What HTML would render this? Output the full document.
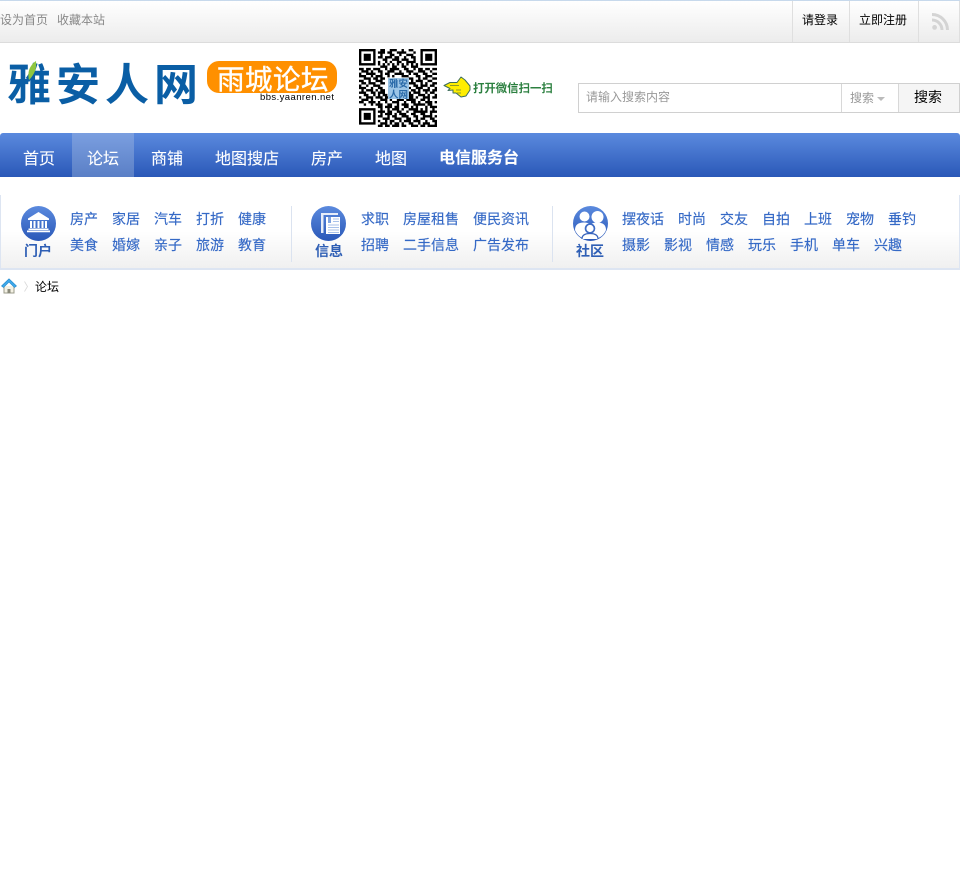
<!DOCTYPE html>
<html lang="zh"><head><meta charset="utf-8"><title>论坛</title>
<style>
html,body{margin:0;padding:0;background:#fff}
#p{position:relative;width:960px;height:873px;overflow:hidden;font-family:"Liberation Sans","WenQuanYi Zen Hei","Noto Sans CJK SC",sans-serif;font-size:12px}
#p div,#p span,#p a,#p svg{position:absolute;display:block}
.t{white-space:nowrap;line-height:20px}
.n{font-size:16px;color:#fff;top:145px;font-family:"Liberation Sans","Noto Sans CJK SC",sans-serif;-webkit-text-stroke:.1px #fff}
.l{font-size:14px;color:#3569c6;font-family:"Liberation Sans","Noto Sans CJK SC",sans-serif;white-space:nowrap;line-height:20px;-webkit-text-stroke:.15px #3569c6}
.r1{top:209px}.r2{top:235px}
.h{font-size:14px;font-weight:700;color:#2f5fb5;top:241px;font-family:"Liberation Sans","Noto Sans CJK SC",sans-serif;line-height:20px;white-space:nowrap}
.v{width:1px;background:#dfdfdf;top:1px;height:41px}
.d{width:1px;background:#dbe3f0;top:206px;height:56px}
</style></head><body><div id="p">
<div style="left:0;top:0;width:960px;height:43px;box-sizing:border-box;border-top:1px solid #c7d9ec;border-bottom:1px solid #dcdcdc;background:linear-gradient(#fff,#ececec)"></div>
<span class="t" style="left:0;top:10px;color:#888">设为首页</span>
<span class="t" style="left:57px;top:10px;color:#888">收藏本站</span>
<div class="v" style="left:792px"></div><div class="v" style="left:849px"></div><div class="v" style="left:918px"></div><div class="v" style="left:959px"></div>
<span class="t" style="left:802px;top:10px;color:#000">请登录</span>
<span class="t" style="left:859px;top:10px;color:#000">立即注册</span>
<svg style="left:932px;top:13px" width="17" height="17" viewBox="0 0 17 17"><circle cx="2.6" cy="14.4" r="2.4" fill="#d4d4d4"/><path d="M0 7a10 10 0 0 1 10 10M0 1.500a15.500 15.500 0 0 1 15.500 15.500" fill="none" stroke="#d4d4d4" stroke-width="3"/></svg>

<span style="left:7px;top:51px;font:700 44px/60px 'Noto Sans CJK SC',sans-serif;color:#0a5ea5;white-space:nowrap;letter-spacing:5px">雅安人网</span>
<svg style="left:27px;top:60px" width="10" height="20" viewBox="0 0 10 20"><path d="M9 1C3 5 0 12 2 20 7 15 10 9 9 1z" fill="#8fc63f"/></svg>
<div style="left:207px;top:61px;width:130px;height:32px;border-radius:12px;background:#ff9000"></div>
<span style="left:217px;top:61px;font:400 27.500px/32px 'Noto Sans CJK SC',sans-serif;color:#fff;white-space:nowrap;letter-spacing:.5px;-webkit-text-stroke:.4px #fff">雨城论坛</span>
<span style="left:260px;top:92px;font:9.500px/12px 'Liberation Sans',sans-serif;color:#000;white-space:nowrap;letter-spacing:.42px">bbs.yaanren.net</span>

<svg style="left:359px;top:49px;filter:blur(.35px)" width="78" height="78" viewBox="0 0 33 33">
<path fill="none" stroke="#000" stroke-width="1" d="M0 .5h7M9 .5h2M13 .5h3M18 .5h1M21 .5h2M26 .5h7
M0 1.500h1M6 1.500h1M8 1.500h3M12 1.500h2M16 1.500h4M23 1.500h1M26 1.500h1M32 1.500h1
M0 2.500h1M2 2.500h3M6 2.500h1M9 2.500h1M13 2.500h2M17 2.500h1M20 2.500h3M26 2.500h1M28 2.500h3M32 2.500h1
M0 3.500h1M2 3.500h3M6 3.500h1M8 3.500h2M11 3.500h3M15 3.500h2M19 3.500h1M22 3.500h2M26 3.500h1M28 3.500h3M32 3.500h1
M0 4.500h1M2 4.500h3M6 4.500h1M10 4.500h2M14 4.500h3M18 4.500h3M23 4.500h1M26 4.500h1M28 4.500h3M32 4.500h1
M0 5.500h1M6 5.500h1M8 5.500h1M11 5.500h1M13 5.500h1M16 5.500h2M20 5.500h4M26 5.500h1M32 5.500h1
M0 6.500h7M8 6.500h1M10 6.500h1M12 6.500h1M14 6.500h1M16 6.500h1M18 6.500h1M20 6.500h1M22 6.500h1M24 6.500h1M26 6.500h7
M9 7.500h3M14 7.500h2M18 7.500h2M22 7.500h3
M0 8.500h2M3 8.500h2M6 8.500h3M11 8.500h1M13 8.500h4M19 8.500h2M23 8.500h1M25 8.500h2M28 8.500h2M31 8.500h2
M1 9.500h3M5 9.500h1M8 9.500h2M12 9.500h3M17 9.500h1M20 9.500h3M25 9.500h3M30 9.500h1
M0 10.500h1M3 10.500h4M9 10.500h1M11 10.500h2M15 10.500h4M21 10.500h1M23 10.500h2M27 10.500h2M31 10.500h2
M0 11.500h3M5 11.500h1M7 11.500h3M12 11.500h1M14 11.500h1M18 11.500h3M24 11.500h2M28 11.500h3
M2 12.500h3M6 12.500h2M9 12.500h2M21 12.500h2M25 12.500h1M27 12.500h2M31 12.500h2
M0 13.500h2M4 13.500h1M7 13.500h3M22 13.500h1M24 13.500h3M29 13.500h2
M1 14.500h2M4 14.500h3M9 14.500h2M21 14.500h3M26 14.500h1M28 14.500h1M31 14.500h2
M0 15.500h1M3 15.500h1M6 15.500h3M23 15.500h2M26 15.500h3M30 15.500h2
M0 16.500h3M5 16.500h1M8 16.500h2M21 16.500h1M24 16.500h3M29 16.500h1M32 16.500h1
M1 17.500h1M3 17.500h3M7 17.500h1M9 17.500h2M22 17.500h2M25 17.500h1M27 17.500h3M31 17.500h2
M0 18.500h3M5 18.500h2M8 18.500h3M21 18.500h1M23 18.500h3M28 18.500h1M30 18.500h2
M2 19.500h2M6 19.500h1M8 19.500h1M10 19.500h2M20 19.500h3M25 19.500h3M29 19.500h1M32 19.500h1
M0 20.500h1M3 20.500h3M7 20.500h3M11 20.500h2M14 20.500h3M18 20.500h1M21 20.500h2M24 20.500h1M27 20.500h3M31 20.500h2
M1 21.500h3M5 21.500h1M9 21.500h3M13 21.500h1M16 21.500h3M20 21.500h4M26 21.500h2M29 21.500h1
M0 22.500h2M4 22.500h3M8 22.500h1M11 22.500h1M14 22.500h3M19 22.500h1M22 22.500h2M25 22.500h1M28 22.500h3M32 22.500h1
M2 23.500h1M5 23.500h1M7 23.500h3M12 23.500h2M16 23.500h1M18 23.500h3M23 23.500h5M29 23.500h2
M8 24.500h2M11 24.500h3M15 24.500h2M19 24.500h2M22 24.500h1M24 24.500h1M28 24.500h1M30 24.500h3
M0 25.500h7M9 25.500h1M12 25.500h1M14 25.500h3M18 25.500h1M21 25.500h3M24 25.500h1M26 25.500h1M28 25.500h1M31 25.500h1
M0 26.500h1M6 26.500h1M8 26.500h3M12 26.500h2M16 26.500h2M20 26.500h1M23 26.500h1M24 26.500h5M30 26.500h3
M0 27.500h1M2 27.500h3M6 27.500h1M9 27.500h1M11 27.500h3M15 27.500h1M17 27.500h3M22 27.500h2M26 27.500h2M30 27.500h1
M0 28.500h1M2 28.500h3M6 28.500h1M8 28.500h2M12 28.500h1M14 28.500h2M18 28.500h3M23 28.500h2M27 28.500h4M32 28.500h1
M0 29.500h1M2 29.500h3M6 29.500h1M10 29.500h3M15 29.500h3M20 29.500h2M24 29.500h1M26 29.500h2M30 29.500h2
M0 30.500h1M6 30.500h1M8 30.500h1M11 30.500h1M13 30.500h2M17 30.500h1M19 30.500h3M23 30.500h3M28 30.500h1M31 30.500h2
M0 31.500h7M9 31.500h3M13 31.500h1M15 31.500h2M18 31.500h1M21 31.500h2M25 31.500h1M27 31.500h3M32 31.500h1
M8 32.500h2M11 32.500h2M14 32.500h3M18 32.500h2M22 32.500h3M26 32.500h2M29 32.500h4"/></svg>
<div style="left:388px;top:78px;width:21px;height:21px;background:#9cc5e6"></div>
<span style="left:388px;top:78px;width:21px;font:700 9.500px/10.500px 'Noto Sans CJK SC',sans-serif;color:#2a6aa8;text-align:center">雅安<br>人网</span>

<svg style="left:443px;top:75px" width="28" height="24" viewBox="0 0 28 24"><path d="M1 10.500L7 7.500h7L18 2l4 3 5 6v4l-4 6-5 1-5-4-3 0v-3l-5 .5L7 13.500z" fill="#ffee00" stroke="#3d6d5a" stroke-width="1" stroke-linejoin="round"/><path d="M7 10.500h9M13 15h5M14 18h4" stroke="#6a7d3a" stroke-width=".8" fill="none"/></svg>
<span style="left:473px;top:78px;font:700 11.400px/20px 'Noto Sans CJK SC',sans-serif;color:#2c8040;white-space:nowrap">打开微信扫一扫</span>

<div style="left:578px;top:83px;width:382px;height:30px;box-sizing:border-box;border:1px solid #d0d0d0;background:#fff"></div>
<div style="left:841px;top:84px;width:1px;height:28px;background:#d8d8d8"></div>
<div style="left:898px;top:84px;width:61px;height:28px;box-sizing:border-box;border-left:1px solid #d8d8d8;background:#f5f5f5"></div>
<span class="t" style="left:586px;top:87px;color:#999">请输入搜索内容</span>
<span class="t" style="left:850px;top:88px;color:#999">搜索</span>
<div style="left:877px;top:97px;width:0;height:0;border:4px solid transparent;border-top-color:#bbb;border-bottom:0"></div>
<span class="t" style="left:914px;top:87px;color:#000;font-size:14px">搜索</span>

<div style="left:0;top:133px;width:960px;height:44px;border-radius:3px 3px 0 0;background:linear-gradient(#5b8ade,#2a58b8)"></div>
<div style="left:72px;top:133px;width:62px;height:44px;background:linear-gradient(#7b9fe0,#5a7fc6)"></div>
<span class="n" style="left:23px">首页</span><span class="n" style="left:87px">论坛</span><span class="n" style="left:151px">商铺</span><span class="n" style="left:215px">地图搜店</span><span class="n" style="left:311px">房产</span><span class="n" style="left:375px">地图</span><span class="n" style="left:439px;top:144px;font-weight:700">电信服务台</span>

<div style="left:0;top:195px;width:960px;height:75px;box-sizing:border-box;border:1px solid #dde5f2;border-top:0;border-bottom-width:2px;background:linear-gradient(#fff 0,#fff 50%,#f0f0f0 100%)"></div>
<div class="d" style="left:291px"></div><div class="d" style="left:552px"></div>

<svg style="left:21px;top:206px" width="35" height="35" viewBox="0 0 35 35"><defs><linearGradient id="g" x1="0" y1="0" x2="0" y2="1"><stop offset="0" stop-color="#5b8ade"/><stop offset="1" stop-color="#2a58b8"/></linearGradient></defs><circle cx="17.500" cy="17.500" r="17.500" fill="url(#g)"/><path d="M17.500 6L28 12.500v1.500H7v-1.500zM9 15h2v7H9zM12.500 15h2v7h-2zM16.500 15h2v7h-2zM20.500 15h2v7h-2zM24 15h2v7h-2zM7.500 22.500h20v1.500h-20zM6 24.500h23v1.800H6z" fill="#fff"/></svg>
<svg style="left:311px;top:206px" width="35" height="35" viewBox="0 0 35 35"><circle cx="17.500" cy="17.500" r="17.500" fill="url(#g)"/><path d="M10 7h17v2H12.500v18H10z" fill="#e6edf9"/><path d="M15 11h14v17H15z" fill="#fff"/><path d="M17 11h3v6h-3z" fill="#7fa3e0"/><path d="M22 13h6M22 15.500h6M17 19h11M17 21.500h11M17 24h11M17 26.500h11" stroke="#a9c2ea" stroke-width="1" fill="none"/></svg>
<svg style="left:573px;top:206px" width="35" height="35" viewBox="0 0 35 35"><circle cx="17.500" cy="17.500" r="17.500" fill="url(#g)"/><circle cx="11.500" cy="10.500" r="5" fill="#fff"/><circle cx="24.500" cy="11" r="6" fill="#fff"/><path d="M2 24c0-5 3-7.500 9-7.500 2.500 0 5 .7 6.500 1.800 1.500-1.100 4-1.800 6.500-1.800 6 0 9 2.500 9 7.500-1.500 4-4.500 7-9 8.500H11C6.500 31 3.500 28 2 24z" fill="#fff"/><circle cx="17" cy="22.500" r="5.300" fill="#3f6cc4"/><circle cx="17" cy="22.500" r="3.600" fill="#fff"/><path d="M9 33c0-4 3-5.500 8-5.500s8 1.500 8 5.500" fill="#fff" stroke="#3461bb" stroke-width="1.200"/></svg>
<span class="h" style="left:24px">门户</span><span class="h" style="left:315px">信息</span><span class="h" style="left:576px">社区</span>

<span class="l r1" style="left:70px">房产</span><span class="l r1" style="left:112px">家居</span><span class="l r1" style="left:154px">汽车</span><span class="l r1" style="left:196px">打折</span><span class="l r1" style="left:238px">健康</span>
<span class="l r2" style="left:70px">美食</span><span class="l r2" style="left:112px">婚嫁</span><span class="l r2" style="left:154px">亲子</span><span class="l r2" style="left:196px">旅游</span><span class="l r2" style="left:238px">教育</span>
<span class="l r1" style="left:361px">求职</span><span class="l r1" style="left:403px">房屋租售</span><span class="l r1" style="left:473px">便民资讯</span>
<span class="l r2" style="left:361px">招聘</span><span class="l r2" style="left:403px">二手信息</span><span class="l r2" style="left:473px">广告发布</span>
<span class="l r1" style="left:622px">摆夜话</span><span class="l r1" style="left:678px">时尚</span><span class="l r1" style="left:720px">交友</span><span class="l r1" style="left:762px">自拍</span><span class="l r1" style="left:804px">上班</span><span class="l r1" style="left:846px">宠物</span><span class="l r1" style="left:888px">垂钓</span>
<span class="l r2" style="left:622px">摄影</span><span class="l r2" style="left:664px">影视</span><span class="l r2" style="left:706px">情感</span><span class="l r2" style="left:748px">玩乐</span><span class="l r2" style="left:790px">手机</span><span class="l r2" style="left:832px">单车</span><span class="l r2" style="left:874px">兴趣</span>

<svg style="left:1px;top:278px" width="16" height="16" viewBox="0 0 16 16"><path d="M3 8v7h10V8" fill="#f4f1e4" stroke="#9a9a8a" stroke-width="1"/><path d="M6.500 15v-4h3v4" fill="#8a8a7a"/><path d="M.500 8L8 .8 15.500 8 13.500 9.500 8 4 2.500 9.500z" fill="#3fa9ea" stroke="#2288cc" stroke-width=".6"/></svg>
<svg style="left:24px;top:281px" width="5" height="11" viewBox="0 0 5 11"><path d="M.500 .500l3 5-3 5" fill="none" stroke="#d8d8d8" stroke-width=".8"/></svg>
<span class="t" style="left:35px;top:277px;color:#000">论坛</span>
</div></body></html>
